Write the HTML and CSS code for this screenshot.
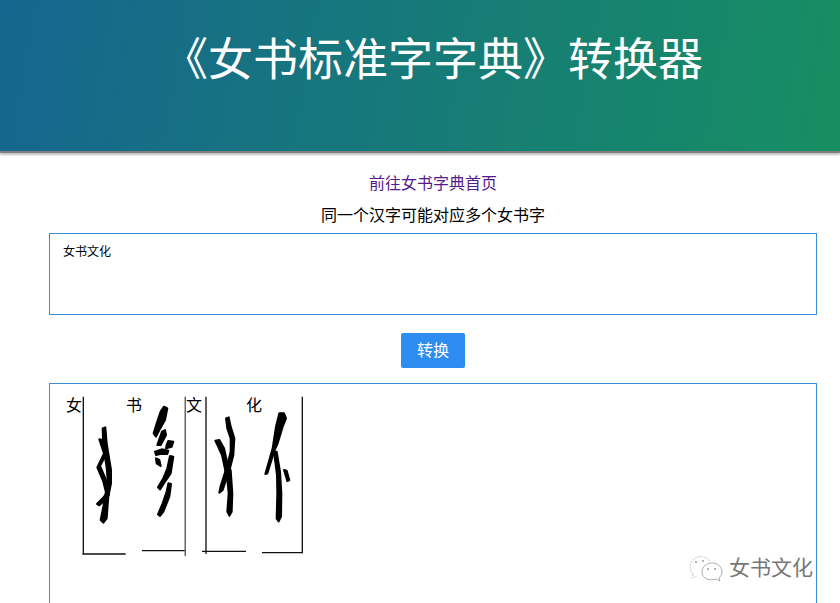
FILE: index.html
```html
<!DOCTYPE html>
<html lang="zh-CN">
<head>
    <meta charset="UTF-8">
    <meta name="viewport" content="width=device-width, initial-scale=1.0">
    <title>《女书标准字字典》转换器</title>
    <link rel="stylesheet" href="styles.css">
</head>
<body>
    <div class="page">
        <header class="banner">
            <h1>《女书标准字字典》转换器</h1>
        </header>

        <main class="container">
            <a class="home-link" href="#">前往女书字典首页</a>
            <p class="hint">同一个汉字可能对应多个女书字</p>

            <textarea class="source" readonly>女书文化</textarea>

            <button class="convert" type="button">转换</button>

            <div class="result">
                <span class="word">女</span>
                <svg class="scan" viewBox="126 48 132 480">
                    <path class="rule" d="M130 50V522M127 522H257"/>
                    <path class="ink" d="M188 145L196 142L200 190L213 270L213 310L205 350L200 415L190 428L182 420L190 380L197 340L203 300L200 262L190 200Z"/>
                    <path class="ink" d="M178 178L186 180L205 232L198 238Z"/>
                    <path class="ink" d="M196 212L200 220L180 258L198 300L207 345L200 345L190 305L172 262Z"/>
                    <path class="ink" d="M171 372L190 352L200 340L200 355L178 376Z"/>
                </svg>
                <span class="word">书</span>
                <svg class="scan" viewBox="306 48 132 480">
                    <path class="rule" d="M306 512H436"/>
                    <path class="rule grey" d="M436 50V535"/>
                    <path class="ink" d="M372 80L382 85L375 120L358 150L348 170L341 160L350 130L362 95Z"/>
                    <path class="ink" d="M366 155L375 150L378 165L362 195L352 195Z"/>
                    <path class="ink" d="M385 183L400 185L395 200L378 205L380 195Z"/>
                    <path class="ink" d="M345 215L365 208L385 212L382 222L360 222L348 225Z"/>
                    <path class="ink" d="M348 235L358 240L362 258L350 250Z"/>
                    <path class="ink" d="M390 228L400 230L392 280L375 305L360 328L354 322L370 295L382 265Z"/>
                    <path class="ink" d="M385 310L393 312L388 350L370 395L360 408L354 403L368 370L380 335Z"/>
                </svg>
                <span class="word">文</span>
                <svg class="scan" viewBox="66 48 132 480">
                    <path class="rule" d="M78 50V522M66 514H198"/>
                    <path class="ink" d="M138 115L146 112L152 140L163 175L160 225L150 265L128 330L118 338L122 318L142 255L152 215L152 175L142 145Z"/>
                    <path class="ink" d="M106 182L118 180L132 205L150 285L140 290L126 225Z"/>
                    <path class="ink" d="M140 275L152 270L157 340L155 395L148 407L142 395L146 340Z"/>
                </svg>
                <span class="word">化</span>
                <svg class="scan" viewBox="246 48 132 480">
                    <path class="rule" d="M246 518H366M367 50V520"/>
                    <path class="ink" d="M298 100L312 100L318 115L308 140L293 190L282 215L262 280L256 282L268 240L278 205L288 140Z"/>
                    <path class="ink" d="M282 215L290 215L300 275L304 340L303 410L296 424L290 415L292 340L291 285Z"/>
                    <path class="ink" d="M312 270L320 272L328 300L322 303Z"/>
                </svg>
            </div>
        </main>

        <div class="watermark">
            <svg class="wechat" viewBox="0 0 36 30">
                <path class="back" d="M5 21C1 17 1 10 6 6C11 2 19 3 22 8M5 21L4 25L9 23"/>
                <path class="front" d="M14 19C14 13 19 10 24 10C30 10 34 14 34 19C34 22 32 24 31 25L32 28L28 26C22 28 14 26 14 19Z"/>
                <circle class="dot" cx="8" cy="9" r="1"/>
                <circle class="dot" cx="15" cy="8" r="1"/>
                <circle class="dot" cx="20" cy="16" r="1"/>
                <circle class="dot" cx="27" cy="16" r="1"/>
            </svg>
            <span>女书文化</span>
        </div>
    </div>
</body>
</html>
```

FILE: styles.css
```css
body {
    margin: 0;
    font-family: "Liberation Sans", "Noto Sans CJK SC", sans-serif;
    background-color: #fff;
    color: #000;
}

.page {
    position: relative;
    height: 603px;
    overflow: hidden;
}

.banner {
    display: flex;
    justify-content: center;
    height: 151px;
    padding-left: 26px;
    background: linear-gradient(100deg, #16668f, #178e62);
    border-bottom: 2px solid #808080;
    box-shadow: 0 2px 2px rgba(0, 0, 0, 0.25);
}

.banner h1 {
    margin: 34px 0 0;
    font-family: "Liberation Serif", "Noto Sans CJK SC", serif;
    font-size: 45px;
    font-weight: 400;
    line-height: 54px;
    color: #fff;
}

.container {
    display: flex;
    flex-direction: column;
    align-items: center;
    margin: 19px 23px 0 49px;
}

.home-link {
    font-size: 16px;
    line-height: 24px;
    color: #551a8b;
    text-decoration: none;
}

.hint {
    margin: 8px 0 5px;
    font-size: 16px;
    line-height: 24px;
}

.source {
    box-sizing: border-box;
    width: 100%;
    height: 82px;
    padding: 10px 13px;
    font-family: inherit;
    font-size: 12px;
    line-height: 16px;
    border: 1px solid #3a8ed6;
    outline: none;
    resize: none;
}

.convert {
    width: 64px;
    height: 35px;
    margin-top: 18px;
    padding: 0 0 3px;
    font-family: inherit;
    font-size: 16px;
    color: #fff;
    background-color: #2d8cf0;
    border: none;
    border-radius: 2px;
}

.result {
    box-sizing: border-box;
    display: flex;
    align-items: flex-start;
    width: 100%;
    height: 260px;
    margin-top: 15px;
    padding: 12px 16px;
    border: 1px solid #3a8ed6;
}

.word {
    font-size: 16px;
    line-height: 20px;
}

.scan {
    display: block;
    width: 44px;
    height: 160px;
}

.scan .rule {
    fill: none;
    stroke: #111;
    stroke-width: 4;
}

.scan .grey {
    stroke: #666;
    stroke-width: 5;
}

.scan .ink {
    fill: #000;
    stroke: #000;
    stroke-width: 6;
    stroke-linejoin: round;
}

.watermark {
    position: absolute;
    left: 688px;
    top: 549px;
    display: flex;
    align-items: center;
    gap: 5px;
    font-size: 21px;
    color: #777;
}

.wechat {
    width: 36px;
    height: 30px;
    margin-top: 4px;
}

.wechat .back,
.wechat .front {
    fill: none;
    stroke: #999;
    stroke-width: 0.8;
}

.wechat .back {
    stroke: #bbb;
    stroke-dasharray: 2 1;
}

.wechat .dot {
    fill: #999;
}
```
